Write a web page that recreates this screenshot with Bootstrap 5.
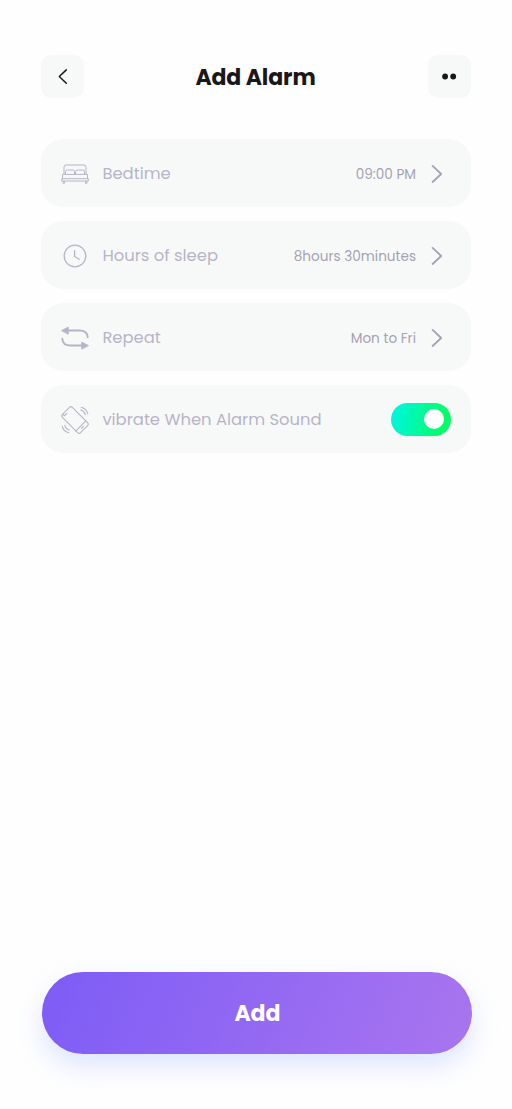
<!DOCTYPE html>
<html lang="en">
<head>
<meta charset="utf-8">
<meta name="viewport" content="width=device-width, initial-scale=1">
<title>Add Alarm</title>
<link href="https://cdn.jsdelivr.net/npm/bootstrap@5.3.0/dist/css/bootstrap.min.css" rel="stylesheet">
<style>
body{font-family:Poppins,Inter,sans-serif;background:#fefefe;color:#1b1718}
.screen{min-height:1109px;padding:55px 41px 55px}
.tool-btn{width:43px;height:43px;border-radius:10px;background:#f7f9f9;padding:0;border:0}
.page-title{font-size:22px;font-weight:700;line-height:43px;letter-spacing:-.1px;padding-top:1px;margin:0 1px -1px 0}
.option-list{margin-top:41.4px;gap:14px}
.option{height:68px;border-radius:22px;background:#f7f9f9;border:0;padding:1px 20px 0;color:#b7b4c7}
.option svg{flex:none}
.option-name{font-size:16.4px;line-height:24px;margin-left:13.4px;padding-top:1px;font-weight:400;white-space:nowrap}
.option-value{font-size:13.6px;line-height:20px;padding-top:2px;font-weight:400;color:#a5a2b1;white-space:nowrap}
.chevron{margin:0 8px 0 15px}
.toggle{width:60.5px;height:33px;border-radius:17px;background:linear-gradient(100deg,#00f5df 5%,#00ff66 85%);padding-right:7px;margin-top:-1px}
.knob{width:20px;height:20px;background:#fff}
.add-btn{height:82px;width:430px;margin-left:1.4px;border-radius:41px;border:0;color:#fff;font-size:22px;font-weight:700;letter-spacing:-.1px;background:linear-gradient(110deg,#7d5cf6,#a975ef);box-shadow:0 12px 26px rgba(149,173,254,.3)}
</style>
</head>
<body>
<main class="screen d-flex flex-column">
  <header class="d-flex justify-content-between align-items-center">
    <button class="tool-btn btn d-flex align-items-center justify-content-center" aria-label="Back">
      <svg width="43" height="43" fill="none" stroke="#1b1718" stroke-width="1.5" stroke-linecap="round" stroke-linejoin="round"><path d="M25.3 14.9L18.3 21.5L25.3 28.2"/></svg>
    </button>
    <h1 class="page-title">Add Alarm</h1>
    <button class="tool-btn btn d-flex align-items-center justify-content-center" aria-label="More">
      <svg width="43" height="43" fill="#1b1718"><circle cx="17.1" cy="21.5" r="2.9"/><circle cx="25.2" cy="21.5" r="2.9"/></svg>
    </button>
  </header>

  <section class="option-list d-flex flex-column">
    <div class="option d-flex align-items-center">
      <svg width="28" height="28" fill="none" stroke="currentColor" stroke-width="1" stroke-linejoin="round"><path d="M3 14V7Q3 5 5 5H23Q25 5 25 7V14M4.5 14V11.5Q4.5 10 6.5 10H12Q13.5 10 13.5 11.5V14M14.5 14V11.5Q14.5 10 16.5 10H22Q23.5 10 23.5 11.5V14M1.5 14.4H26.5V18.7M1.5 14.4V18.7M.7 18.7H27.3V21H.7ZM2.1 21V23.3H3.4V21M24.6 21V23.3H25.9V21"/></svg>
      <span class="option-name">Bedtime</span>
      <span class="option-value ms-auto">09:00 PM</span>
      <svg class="chevron" width="12" height="20" fill="none" stroke="#a5a2b1" stroke-width="1.8" stroke-linecap="round" stroke-linejoin="round"><path d="M1.6 1.9L10.2 10L1.6 18"/></svg>
    </div>
    <div class="option d-flex align-items-center">
      <svg width="28" height="28" fill="none" stroke="currentColor" stroke-width="1.3" stroke-linecap="round" stroke-linejoin="round"><circle cx="14" cy="14" r="10.8"/><path d="M13.6 8.7V14.5L18.1 17.3"/></svg>
      <span class="option-name">Hours of sleep</span>
      <span class="option-value ms-auto">8hours 30minutes</span>
      <svg class="chevron" width="12" height="20" fill="none" stroke="#a5a2b1" stroke-width="1.8" stroke-linecap="round" stroke-linejoin="round"><path d="M1.6 1.9L10.2 10L1.6 18"/></svg>
    </div>
    <div class="option d-flex align-items-center">
      <svg width="28" height="28" fill="none" stroke="currentColor" stroke-width="1.9" stroke-linecap="round" stroke-linejoin="round"><path d="M7 6.5H18.5C24 6.5 26.5 9.5 26.7 13.3M21 21.5H9.5C4 21.5 1.5 18.5 1.3 14.7"/><path fill="currentColor" stroke-width="1" d="M.9 6.5L7.2 3.2V9.8ZM27.1 21.5L20.8 18.2V24.8Z"/></svg>
      <span class="option-name">Repeat</span>
      <span class="option-value ms-auto">Mon to Fri</span>
      <svg class="chevron" width="12" height="20" fill="none" stroke="#a5a2b1" stroke-width="1.8" stroke-linecap="round" stroke-linejoin="round"><path d="M1.6 1.9L10.2 10L1.6 18"/></svg>
    </div>
    <div class="option d-flex align-items-center">
      <svg width="28" height="28" fill="none" stroke="currentColor" stroke-width="1.1" stroke-linecap="round" stroke-linejoin="round"><g transform="rotate(-45 14 14)"><rect x="7" y="1.2" width="14" height="25.6" rx="2"/><path d="M7 22.3H21M12.5 24.5H15.5M9.5 1.5V3.5H13"/></g><path d="M19.8 3.9Q23.3 5 24.2 8.6M20.3 1.2Q25.7 2.6 26.8 7.8M8.2 24.1Q4.7 23 3.8 19.4M7.7 26.8Q2.3 25.4 1.2 20.2"/></svg>
      <span class="option-name">vibrate When Alarm Sound</span>
      <div class="toggle ms-auto d-flex align-items-center justify-content-end" role="switch" aria-checked="true" aria-label="Vibrate"><span class="knob rounded-circle"></span></div>
    </div>
  </section>

  <button class="add-btn btn mt-auto">Add</button>
</main>
<script src="https://cdn.jsdelivr.net/npm/bootstrap@5.3.0/dist/js/bootstrap.bundle.min.js"></script>
</body>
</html>
